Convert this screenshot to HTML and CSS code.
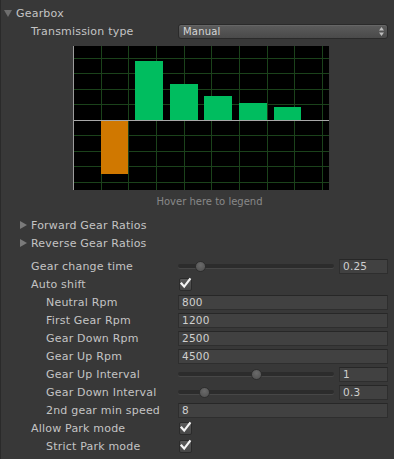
FILE: index.html
```html
<!DOCTYPE html>
<html>
<head>
<meta charset="utf-8">
<link rel="stylesheet" href="styles.css">
</head>
<body>
<div class="inspector">
  <div class="row head">
    <svg class="tri" width="8" height="7" viewBox="0 0 8 7"><polygon points="0,0 8,0 4,7" fill="#6e6e6e"/></svg>
    <span>Gearbox</span>
  </div>
  <div class="row l1">
    <span class="label">Transmission type</span>
    <div class="ctrl">
      <div class="popup"><span>Manual</span>
        <svg width="5" height="9" viewBox="0 0 5 9"><polygon points="0,3.5 5,3.5 2.5,0" fill="#bdbdbd"/><polygon points="0,5.5 5,5.5 2.5,9" fill="#bdbdbd"/></svg>
      </div>
    </div>
  </div>
  <div class="chart-wrap">
    <svg class="chart" width="256" height="144" viewBox="0 0 256 144">
      <rect width="256" height="144" fill="#000"/>
      <g stroke="#1b421b" stroke-width="1">
        <line x1="28.5" y1="0" x2="28.5" y2="144"/>
        <line x1="55.5" y1="0" x2="55.5" y2="144"/>
        <line x1="83.5" y1="0" x2="83.5" y2="144"/>
        <line x1="111.5" y1="0" x2="111.5" y2="144"/>
        <line x1="138.5" y1="0" x2="138.5" y2="144"/>
        <line x1="166.5" y1="0" x2="166.5" y2="144"/>
        <line x1="194.5" y1="0" x2="194.5" y2="144"/>
        <line x1="221.5" y1="0" x2="221.5" y2="144"/>
        <line x1="249.5" y1="0" x2="249.5" y2="144"/>
        <line x1="0" y1="12.5" x2="256" y2="12.5"/>
        <line x1="0" y1="27.5" x2="256" y2="27.5"/>
        <line x1="0" y1="43.5" x2="256" y2="43.5"/>
        <line x1="0" y1="58.5" x2="256" y2="58.5"/>
        <line x1="0" y1="89.5" x2="256" y2="89.5"/>
        <line x1="0" y1="105.5" x2="256" y2="105.5"/>
        <line x1="0" y1="120.5" x2="256" y2="120.5"/>
        <line x1="0" y1="136.5" x2="256" y2="136.5"/>
      </g>
      <rect x="28" y="75" width="27" height="53" fill="#d07800"/>
      <g fill="#00bd5f">
        <rect x="62" y="15" width="28" height="59"/>
        <rect x="97" y="38" width="28" height="36"/>
        <rect x="131" y="50" width="28" height="24"/>
        <rect x="166" y="57" width="28" height="17"/>
        <rect x="201" y="61" width="27" height="13"/>
      </g>
      <line x1="0" y1="74.5" x2="256" y2="74.5" stroke="#a8a8a8"/>
      <line x1="0.5" y1="0" x2="0.5" y2="144" stroke="#9c9c9c"/>
    </svg>
  </div>
  <div class="legend">Hover here to legend</div>
  <div class="row fold">
    <svg class="tri" width="7" height="8" viewBox="0 0 7 8"><polygon points="0,0 7,4 0,8" fill="#7a7a7a"/></svg>
    <span>Forward Gear Ratios</span>
  </div>
  <div class="row fold">
    <svg class="tri" width="7" height="8" viewBox="0 0 7 8"><polygon points="0,0 7,4 0,8" fill="#7a7a7a"/></svg>
    <span>Reverse Gear Ratios</span>
  </div>

  <div class="props">
    <div class="row l1">
      <span class="label">Gear change time</span>
      <div class="ctrl slider-ctrl">
        <div class="slider"><div class="track"></div><div class="knob" style="left: 17px"></div></div>
        <div class="field num">0.25</div>
      </div>
    </div>
    <div class="row l1">
      <span class="label">Auto shift</span>
      <div class="ctrl"><div class="check"><svg width="13" height="13" viewBox="0 0 13 13"><path d="M2.5 6.5 L5.2 9.6 L10.8 2.2" fill="none" stroke="#f4f4f4" stroke-width="2.2" stroke-linecap="square"/></svg></div></div>
    </div>
    <div class="row l2">
      <span class="label">Neutral Rpm</span>
      <div class="ctrl"><div class="field">800</div></div>
    </div>
    <div class="row l2">
      <span class="label">First Gear Rpm</span>
      <div class="ctrl"><div class="field">1200</div></div>
    </div>
    <div class="row l2">
      <span class="label">Gear Down Rpm</span>
      <div class="ctrl"><div class="field">2500</div></div>
    </div>
    <div class="row l2">
      <span class="label">Gear Up Rpm</span>
      <div class="ctrl"><div class="field">4500</div></div>
    </div>
    <div class="row l2">
      <span class="label">Gear Up Interval</span>
      <div class="ctrl slider-ctrl">
        <div class="slider"><div class="track"></div><div class="knob" style="left: 73px"></div></div>
        <div class="field num">1</div>
      </div>
    </div>
    <div class="row l2">
      <span class="label">Gear Down Interval</span>
      <div class="ctrl slider-ctrl">
        <div class="slider"><div class="track"></div><div class="knob" style="left: 21px"></div></div>
        <div class="field num">0.3</div>
      </div>
    </div>
    <div class="row l2">
      <span class="label">2nd gear min speed</span>
      <div class="ctrl"><div class="field">8</div></div>
    </div>
    <div class="row l1">
      <span class="label">Allow Park mode</span>
      <div class="ctrl"><div class="check"><svg width="13" height="13" viewBox="0 0 13 13"><path d="M2.5 6.5 L5.2 9.6 L10.8 2.2" fill="none" stroke="#f4f4f4" stroke-width="2.2" stroke-linecap="square"/></svg></div></div>
    </div>
    <div class="row l2">
      <span class="label">Strict Park mode</span>
      <div class="ctrl"><div class="check"><svg width="13" height="13" viewBox="0 0 13 13"><path d="M2.5 6.5 L5.2 9.6 L10.8 2.2" fill="none" stroke="#f4f4f4" stroke-width="2.2" stroke-linecap="square"/></svg></div></div>
    </div>
  </div>
</div>
</body>
</html>
```

FILE: styles.css
```css
html, body {
  margin: 0;
  padding: 0;
  background: #383838;
}
body {
  width: 394px;
  height: 459px;
  overflow: hidden;
  box-shadow: inset 1px 0 0 #2a2a2a;
  font-family: "DejaVu Sans", "Liberation Sans", sans-serif;
  font-size: 11px;
  letter-spacing: 0.2px;
  color: #c4c4c4;
}
.inspector {
  padding-top: 4px;
}
.row {
  display: flex;
  align-items: center;
  height: 18px;
  padding-right: 6px;
  box-sizing: border-box;
  white-space: nowrap;
}
.head {
  padding-left: 4px;
  gap: 4px;
}
.l1 { padding-left: 31px; }
.l2 { padding-left: 46px; }
.label {
  flex: 1;
}
.ctrl {
  width: 210px;
  display: flex;
  align-items: center;
}
.popup {
  flex: 1;
  height: 15px;
  box-sizing: border-box;
  border: 1px solid #2a2a2a;
  border-radius: 3px;
  background: linear-gradient(#5c5c5c, #4a4a4a);
  box-shadow: inset 0 1px 0 #666666;
  display: flex;
  align-items: center;
  justify-content: space-between;
  padding: 0 3px 0 4px;
  font-size: 10px;
  color: #d6d6d6;
}
.chart-wrap {
  margin-top: 6px;
  padding-left: 73px;
  height: 144px;
}
.chart { display: block; }
.legend {
  height: 26px;
  box-sizing: border-box;
  padding: 6px 6px 0 31px;
  line-height: 12px;
  font-size: 10px;
  letter-spacing: 0;
  text-align: center;
  color: #888888;
}
.fold {
  padding-left: 20px;
  gap: 4px;
}
.props {
  margin-top: 5px;
}
.field {
  flex: 1;
  height: 15px;
  box-sizing: border-box;
  background: #414141;
  border: 1px solid #2e2e2e;
  border-top-color: #272727;
  border-radius: 1px;
  padding: 0 3px;
  line-height: 13px;
  font-size: 10.5px;
  color: #d0d0d0;
}
.slider-ctrl {
  gap: 5px;
}
.slider {
  flex: 1;
  position: relative;
  height: 15px;
}
.track {
  position: relative;
  top: 5px;
  height: 4px;
  border-radius: 2px;
  background: #2c2c2c;
  box-shadow: 0 1px 0 #474747;
}
.knob {
  position: absolute;
  top: 2px;
  width: 11px;
  height: 11px;
  box-sizing: border-box;
  border-radius: 50%;
  border: 1px solid #2e2e2e;
  background: radial-gradient(circle at 50% 35%, #6a6a6a, #4e4e4e);
}
.num {
  flex: 0 0 49px;
}
.check {
  width: 13px;
  height: 13px;
  box-sizing: border-box;
  margin-left: 1px;
  border: 1px solid #2b2b2b;
  border-radius: 2px;
  background: linear-gradient(#5a5a5a, #464646);
  position: relative;
}
.check svg {
  position: absolute;
  left: -1px;
  top: -2px;
}
```
